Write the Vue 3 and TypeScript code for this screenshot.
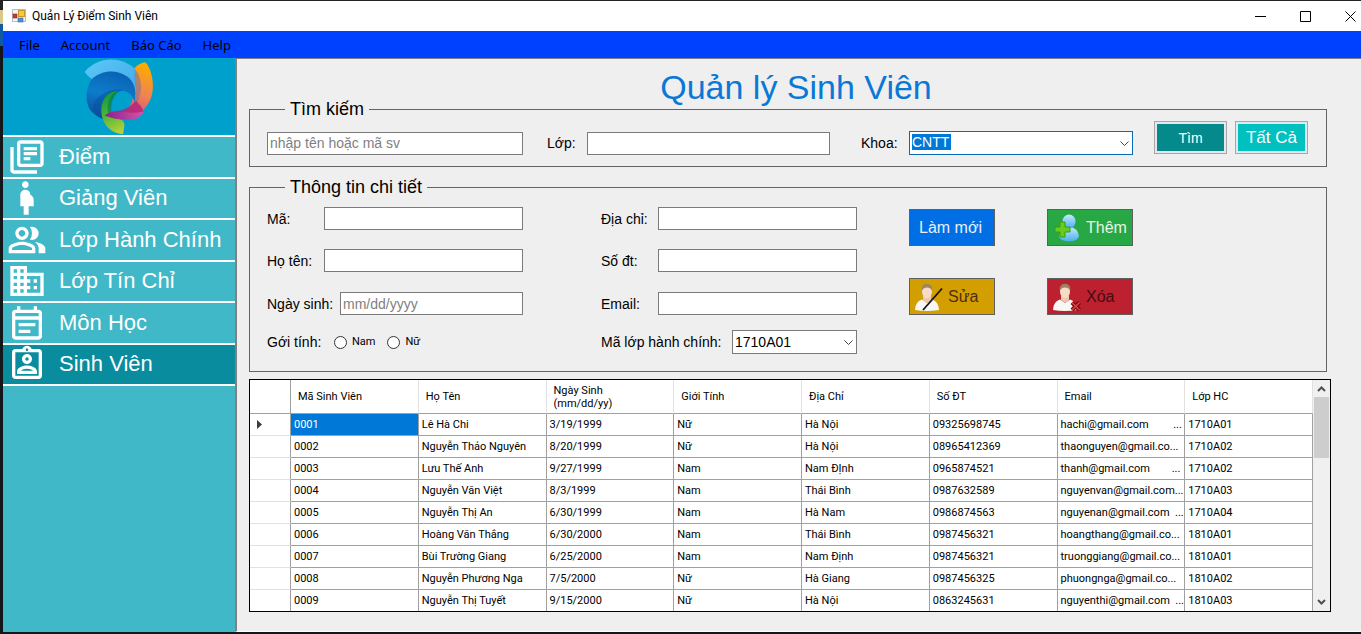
<script setup lang="ts">
import { ref } from 'vue'

interface Student {
  id: string
  name: string
  birth: string
  gender: string
  address: string
  phone: string
  email: string
  group: string
}

const menus = ['File', 'Account', 'Báo Cáo', 'Help']

const navItems = [
  {
    label: 'Điểm',
    path: 'M4 6H2v14c0 1.1.9 2 2 2h14v-2H4V6zm16-4H8c-1.1 0-2 .9-2 2v12c0 1.1.9 2 2 2h12c1.1 0 2-.9 2-2V4c0-1.1-.9-2-2-2zm0 14H8V4h12v12zM10 9h8v2h-8zm0 3h4v2h-4zm0-6h8v2h-8z',
  },
  {
    label: 'Giảng Viên',
    path: 'M9 4c0-1.11.89-2 2-2s2 .89 2 2-.89 2-2 2-2-.89-2-2zm7 9c-.01-1.34-.83-2.51-2-3 0-1.66-1.34-3-3-3s-3 1.34-3 3v7h2v5h3v-5h3v-4z',
  },
  {
    label: 'Lớp Hành Chính',
    path: 'M16.67 13.13C18.04 14.06 19 15.32 19 17v3h4v-3c0-2.18-3.57-3.47-6.33-3.87zM15 12c2.21 0 4-1.79 4-4s-1.79-4-4-4c-.47 0-.91.1-1.33.24a5.98 5.98 0 010 7.52c.42.14.86.24 1.33.24zM9 12c2.21 0 4-1.79 4-4s-1.79-4-4-4-4 1.79-4 4 1.79 4 4 4zm0-6c1.1 0 2 .9 2 2s-.9 2-2 2-2-.9-2-2 .9-2 2-2zm0 7c-2.67 0-8 1.34-8 4v3h16v-3c0-2.66-5.33-4-8-4zm6 5H3v-.99C3.2 16.29 6.3 15 9 15s5.8 1.29 6 2v1z',
  },
  {
    label: 'Lớp Tín Chỉ',
    path: 'M12 7V3H2v18h20V7H12zM6 19H4v-2h2v2zm0-4H4v-2h2v2zm0-4H4V9h2v2zm0-4H4V5h2v2zm4 12H8v-2h2v2zm0-4H8v-2h2v2zm0-4H8V9h2v2zm0-4H8V5h2v2zm10 12h-8v-2h2v-2h-2v-2h2v-2h-2V9h8v10zm-2-8h-2v2h2v-2zm0 4h-2v2h2v-2z',
  },
  {
    label: 'Môn Học',
    path: 'M19 4h-1V2h-2v2H8V2H6v2H5c-1.11 0-1.99.9-1.99 2L3 20c0 1.1.89 2 2 2h14c1.1 0 2-.9 2-2V6c0-1.1-.9-2-2-2zm0 16H5V10h14v10zm0-12H5V6h14v2zM7 12h10v2H7zM7 16h7v2H7z',
  },
  {
    label: 'Sinh Viên',
    path: 'M19 3h-4.18C14.4 1.84 13.3 1 12 1s-2.4.84-2.82 2H5c-1.1 0-2 .9-2 2v14c0 1.1.9 2 2 2h14c1.1 0 2-.9 2-2V5c0-1.1-.9-2-2-2zm-7-.25c.41 0 .75.34.75.75s-.34.75-.75.75-.75-.34-.75-.75.34-.75.75-.75zM19 19H5V5h14v14zM12 6c-1.65 0-3 1.35-3 3s1.35 3 3 3 3-1.35 3-3-1.35-3-3-3zm0 4c-.55 0-1-.45-1-1s.45-1 1-1 1 .45 1 1-.45 1-1 1zM6 16.47V18h12v-1.53c0-2.5-3.97-3.58-6-3.58s-6 1.07-6 3.58zM8.31 16c.69-.56 2.38-1.12 3.69-1.12s3.01.56 3.69 1.12H8.31z',
  },
]
const activeNav = ref('Sinh Viên')

const columns = ['Mã Sinh Viên', 'Họ Tên', 'Ngày Sinh\n(mm/dd/yy)', 'Giới Tính', 'Địa Chỉ', 'Số ĐT', 'Email', 'Lớp HC']

// E-mail comes from a fixed-length column: the blanks are part of the shortened value.
const students: Student[] = [
  { id: '0001', name: 'Lê Hà Chi', birth: '3/19/1999', gender: 'Nữ', address: 'Hà Nội', phone: '09325698745', email: 'hachi@gmail.com         ...', group: '1710A01' },
  { id: '0002', name: 'Nguyễn Thảo Nguyên', birth: '8/20/1999', gender: 'Nữ', address: 'Hà Nội', phone: '08965412369', email: 'thaonguyen@gmail.co...', group: '1710A02' },
  { id: '0003', name: 'Lưu Thế Anh', birth: '9/27/1999', gender: 'Nam', address: 'Nam ĐỊnh', phone: '0965874521', email: 'thanh@gmail.com        ...', group: '1710A02' },
  { id: '0004', name: 'Nguyễn Văn Việt', birth: '8/3/1999', gender: 'Nam', address: 'Thái Bình', phone: '0987632589', email: 'nguyenvan@gmail.com...', group: '1710A03' },
  { id: '0005', name: 'Nguyễn Thị An', birth: '6/30/1999', gender: 'Nam', address: 'Hà Nam', phone: '0986874563', email: 'nguyenan@gmail.com  ...', group: '1710A04' },
  { id: '0006', name: 'Hoàng Văn Thắng', birth: '6/30/2000', gender: 'Nam', address: 'Thái Bình', phone: '0987456321', email: 'hoangthang@gmail.co...', group: '1810A01' },
  { id: '0007', name: 'Bùi Trường Giang', birth: '6/25/2000', gender: 'Nam', address: 'Nam Định', phone: '0987456321', email: 'truonggiang@gmail.co...', group: '1810A01' },
  { id: '0008', name: 'Nguyễn Phương Nga', birth: '7/5/2000', gender: 'Nữ', address: 'Hà Giang', phone: '0987456325', email: 'phuongnga@gmail.co...', group: '1810A02' },
  { id: '0009', name: 'Nguyễn Thị Tuyết', birth: '9/15/2000', gender: 'Nữ', address: 'Hà Nội', phone: '0863245631', email: 'nguyenthi@gmail.com  ...', group: '1810A03' },
]

const selectedId = ref('0001')
const faculty = ref('CNTT')
const groupCode = ref('1710A01')
const gender = ref('')
</script>

<template>
  <div class="window">
    <header class="titlebar">
      <svg class="app-icon" viewBox="0 0 14 14" aria-hidden="true">
        <rect x="0.5" y="0.5" width="13" height="12" fill="#f4f4f4" stroke="#b8bcc4" />
        <rect x="6.5" y="1.5" width="6" height="6" fill="#f7c93c" stroke="#c8962a" />
        <rect x="1" y="5" width="4" height="4" fill="#c43a31" stroke="#8f2a25" stroke-width=".6" />
        <rect x="6" y="9" width="5" height="4" fill="#4c8fd6" stroke="#3a6ea8" stroke-width=".6" />
      </svg>
      <span class="caption">Quản Lý Điểm Sinh Viên</span>
      <div class="win-buttons">
        <button type="button" aria-label="Thu nhỏ">
          <svg viewBox="0 0 11 11"><path d="M0 5.5h11" /></svg>
        </button>
        <button type="button" aria-label="Phóng to">
          <svg viewBox="0 0 11 11"><path d="M.5.5h10v10h-10z" /></svg>
        </button>
        <button type="button" aria-label="Đóng">
          <svg viewBox="0 0 11 11"><path d="M.5.5l10 10M10.5.5l-10 10" /></svg>
        </button>
      </div>
    </header>

    <nav class="menubar">
      <button v-for="m in menus" :key="m" type="button">{{ m }}</button>
    </nav>

    <div class="body">
      <aside class="sidebar">
        <div class="logo">
          <svg viewBox="250 175 220 235" aria-hidden="true">
            <defs>
              <linearGradient id="sky" x1="0" y1="0" x2="1" y2="1">
                <stop offset="0" stop-color="#5cc8f6" /><stop offset="1" stop-color="#3fa9ea" />
              </linearGradient>
              <linearGradient id="blue" x1="0.6" y1="0" x2="0.3" y2="1">
                <stop offset="0" stop-color="#0a62b4" /><stop offset=".5" stop-color="#0d7ccb" /><stop offset="1" stop-color="#0a4f9c" />
              </linearGradient>
              <linearGradient id="orange" x1="0.6" y1="0" x2="0.3" y2="1">
                <stop offset="0" stop-color="#ffaa00" /><stop offset=".5" stop-color="#f08254" /><stop offset="1" stop-color="#c9418c" />
              </linearGradient>
              <linearGradient id="pink" x1="0" y1="0" x2="1" y2="0">
                <stop offset="0" stop-color="#8c1f8c" /><stop offset="1" stop-color="#d355ab" />
              </linearGradient>
              <linearGradient id="green" x1="0.3" y1="0" x2="0.6" y2="1">
                <stop offset="0" stop-color="#0c9640" /><stop offset=".5" stop-color="#4fb63c" /><stop offset="1" stop-color="#b4cf38" />
              </linearGradient>
            </defs>
            <path fill="url(#orange)" d="M405 206Q420 190 438 188C456 206 466 250 458 285C450 320 420 350 385 357Q360 360 345 350C385 336 402 315 401 280Q404 235 405 206Z" />
            <path fill="url(#sky)" d="M255 217C285 180 340 168 385 192Q398 198 407 208L408 292C398 240 350 210 277 238Q262 228 255 217Z" />
            <path fill="url(#blue)" d="M277 238C305 212 350 208 382 230C404 246 413 270 405 310C402 284 378 268 356 275C330 285 318 318 326 345L309 358C283 349 262 328 261 296C260 274 266 252 277 238Z" />
            <path fill="#0a4c96" opacity=".45" d="M282 330C270 300 330 260 372 272C345 278 326 302 326 345L309 358Q292 350 282 330Z" />
            <path fill="#7d7796" opacity=".6" d="M406 208Q424 226 425 262Q425 302 398 329Q410 302 409 270Q403 232 406 208Z" />
            <path fill="url(#green)" d="M356 274C336 288 324 318 332 344C342 360 372 352 375 376L371 405C325 400 304 366 305 328C307 297 328 275 356 274Z" />
            <path fill="#0b7b38" opacity=".6" d="M356 274C330 283 319 315 326 342L336 342Q330 305 356 274Z" />
            <path fill="url(#pink)" d="M315 348Q345 328 372 337Q400 344 433 335Q430 351 412 357C382 365 345 360 315 348Z" />
            <path fill="#b01d7c" opacity=".75" d="M352 336Q384 332 410 304Q430 325 432 336Q398 344 372 337Z" />
          </svg>
        </div>
        <nav class="side-nav">
          <button
            v-for="item in navItems"
            :key="item.label"
            type="button"
            :class="{ active: item.label === activeNav }"
            @click="activeNav = item.label"
          >
            <svg viewBox="0 0 24 24" aria-hidden="true"><path :d="item.path" /></svg>
            <span>{{ item.label }}</span>
          </button>
        </nav>
      </aside>

      <main class="content">
        <h1>Quản lý Sinh Viên</h1>

        <fieldset class="search">
          <legend>Tìm kiếm</legend>
          <div class="search-fields">
            <input class="f-keyword" type="text" placeholder="nhập tên hoặc mã sv" aria-label="Tìm kiếm" />
            <label for="lop">Lớp:</label>
            <input id="lop" class="f-class" type="text" />
            <label for="khoa">Khoa:</label>
            <span class="combo f-faculty highlighted">
              <select id="khoa" v-model="faculty"><option>CNTT</option></select>
              <svg viewBox="0 0 9 6" aria-hidden="true"><path d="M.5.5l4 4 4-4" /></svg>
            </span>
          </div>
          <div class="search-actions">
            <button type="button" class="find">Tìm</button>
            <button type="button" class="all">Tất Cả</button>
          </div>
        </fieldset>

        <fieldset class="details">
          <legend>Thông tin chi tiết</legend>
          <div class="column">
            <div class="row"><label for="ma">Mã:</label><input id="ma" type="text" /></div>
            <div class="row"><label for="ten">Họ tên:</label><input id="ten" type="text" /></div>
            <div class="row wide"><label for="ns">Ngày sinh:</label><input id="ns" type="text" placeholder="mm/dd/yyyy" /></div>
            <div class="row genders" role="radiogroup" aria-labelledby="gt">
              <span id="gt">Gới tính:</span>
              <label><input v-model="gender" type="radio" name="gender" value="Nam" />Nam</label>
              <label><input v-model="gender" type="radio" name="gender" value="Nữ" />Nữ</label>
            </div>
          </div>
          <div class="column">
            <div class="row"><label for="dc">Địa chỉ:</label><input id="dc" type="text" /></div>
            <div class="row"><label for="dt">Số đt:</label><input id="dt" type="text" /></div>
            <div class="row"><label for="em">Email:</label><input id="em" type="text" /></div>
            <div class="row group-code">
              <label for="lhc">Mã lớp hành chính:</label>
              <span class="combo">
                <select id="lhc" v-model="groupCode"><option>1710A01</option></select>
                <svg viewBox="0 0 9 6" aria-hidden="true"><path d="M.5.5l4 4 4-4" /></svg>
              </span>
            </div>
          </div>
          <div class="actions">
            <button type="button" class="reset">Làm mới</button>
            <button type="button" class="add">
              <svg viewBox="0 0 28 28" aria-hidden="true">
                <defs>
                  <linearGradient id="person" x1="0" y1="0" x2="0" y2="1">
                    <stop offset="0" stop-color="#c4eafc" /><stop offset="1" stop-color="#4aaeee" />
                  </linearGradient>
                </defs>
                <path d="M6 23C7 16 12 13 17 13Q25 14 26 22Q25 27 16 27.500Q8 27 6 23Z" fill="url(#person)" />
                <ellipse cx="16" cy="7.500" rx="6.500" ry="7" fill="url(#person)" />
                <path d="M7 8h5v5h5v5h-5v5H7v-5H2v-5h5z" fill="#66cc1e" stroke="#3d9a14" />
              </svg>
              <span>Thêm</span>
            </button>
            <button type="button" class="edit">
              <svg viewBox="0 0 28 28" aria-hidden="true">
                <path d="M0 27Q0 19 7 16.500L12 20 17 16.500Q24 19 24 27Q12 29 0 27Z" fill="#f7f7f5" />
                <path d="M8 13h8v4l-4 3-4-3z" fill="#ecc9ae" />
                <ellipse cx="12" cy="8.500" rx="5" ry="6.800" fill="#f6dcc6" />
                <path d="M6.800 8Q6 1 12 .8Q18 1 17.200 8Q16 4.500 12 4.500T6.800 8Z" fill="#9b8563" />
                <path d="M8 27L27 5.500" stroke="#141414" stroke-width="1.800" />
              </svg>
              <span>Sửa</span>
            </button>
            <button type="button" class="remove">
              <svg viewBox="0 0 28 28" aria-hidden="true">
                <path d="M0 27Q0 19 7 16.500L12 20 17 16.500Q24 19 24 27Q12 29 0 27Z" fill="#f7f7f5" />
                <path d="M8 13h8v4l-4 3-4-3z" fill="#ecc9ae" />
                <ellipse cx="12" cy="8.500" rx="5" ry="6.800" fill="#f6dcc6" />
                <path d="M6.800 8Q6 1 12 .8Q18 1 17.200 8Q16 4.500 12 4.500T6.800 8Z" fill="#9b8563" />
                <path d="M19 19.500l7.500 7.500M26.500 19.500l-7.500 7.500" stroke="#74090f" stroke-width="4" />
                <path d="M19 19.500l7.500 7.500M26.500 19.500l-7.500 7.500" stroke="#e84040" stroke-width="1.600" />
              </svg>
              <span>Xóa</span>
            </button>
          </div>
        </fieldset>

        <div class="grid">
          <table>
            <colgroup><col class="marker-col" /><col v-for="c in columns" :key="c" /></colgroup>
            <thead>
              <tr>
                <th class="marker"></th>
                <th v-for="c in columns" :key="c" scope="col">{{ c }}</th>
              </tr>
            </thead>
            <tbody>
              <tr v-for="s in students" :key="s.id" @click="selectedId = s.id">
                <td class="marker">
                  <svg v-if="s.id === selectedId" viewBox="0 0 5 9" aria-hidden="true"><path d="M0 0l5 4.500L0 9z" /></svg>
                </td>
                <td :class="{ selected: s.id === selectedId }">{{ s.id }}</td>
                <td>{{ s.name }}</td>
                <td>{{ s.birth }}</td>
                <td>{{ s.gender }}</td>
                <td>{{ s.address }}</td>
                <td>{{ s.phone }}</td>
                <td class="email">{{ s.email }}</td>
                <td>{{ s.group }}</td>
              </tr>
            </tbody>
          </table>
          <div class="scrollbar" aria-hidden="true">
            <svg viewBox="0 0 9 6"><path d="M1 5l3.500-3.500L8 5" /></svg>
            <div class="track"><div class="thumb"></div></div>
            <svg viewBox="0 0 9 6"><path d="M1 1l3.500 3.500L8 1" /></svg>
          </div>
        </div>
      </main>
    </div>
  </div>
</template>

<style>
body {
  margin: 0;
  background: #16181b;
}
</style>

<style scoped>
* {
  box-sizing: border-box;
}
button,
input,
select {
  font: inherit;
  color: inherit;
  border-radius: 0;
  margin: 0;
}
.window {
  display: flex;
  flex-direction: column;
  min-height: 100vh;
  padding: 1px 0 2px 3px;
  font: 14px/20px "Liberation Sans", Arial, sans-serif;
  color: #000;
  background: linear-gradient(#222 10px, #d9c88c 10px 24px, #0f5aa0 24px 46px, #14171a 46px);
}
.titlebar {
  display: flex;
  align-items: center;
  height: 30px;
  padding-left: 9px;
  background: #fff;
}
.app-icon {
  width: 14px;
  height: 14px;
}
.caption {
  flex: 1;
  padding-left: 6px;
  font: 12px/16px Roboto, sans-serif;
}
.win-buttons {
  display: flex;
  gap: 23px;
}
.win-buttons button {
  display: flex;
  justify-content: center;
  align-items: center;
  width: 22px;
  height: 30px;
  padding: 0;
  border: 0;
  background: none;
}
.win-buttons svg {
  width: 11px;
  height: 11px;
  fill: none;
  stroke: #000;
}
.menubar {
  display: flex;
  gap: 21px;
  height: 27px;
  padding-left: 16px;
  background: #0040ff;
  font: 13px/28px "Noto Sans", sans-serif;
}
.menubar button {
  padding: 0;
  border: 0;
  background: none;
}
.body {
  display: flex;
  flex: 1;
}
.sidebar {
  width: 232px;
  flex: none;
  background: #40b8c8;
}
.logo {
  display: flex;
  justify-content: center;
  height: 77px;
  background: #00a0cc;
}
.logo svg {
  width: 73px;
  height: 78px;
}
.side-nav {
  display: flex;
  flex-direction: column;
  height: 251px;
  border-top: 2px solid #fff;
}
.side-nav button {
  display: flex;
  flex: 1;
  align-items: center;
  gap: 12px;
  min-height: 0;
  padding: 0 0 0 4px;
  border: 0;
  border-bottom: 2px solid #fff;
  background: none;
  color: #fff;
  font-size: 22px;
  line-height: 28px;
  text-align: left;
}
.side-nav button.active {
  background: #088c9e;
}
.side-nav svg {
  width: 40px;
  height: 40px;
  fill: #fff;
}
.content {
  flex: 1;
  min-width: 0;
  padding: 16px 30px 17px 12px;
  border: 1px solid #808080;
  border-width: 1px 0 0 2px;
  border-bottom: 1px solid #fff;
  background: #efefef;
}
h1 {
  margin: 0;
  padding-left: 12px;
  font-size: 34px;
  font-weight: 400;
  line-height: 24px;
  text-align: center;
  color: #0a78d6;
}
fieldset {
  min-width: 0;
  margin: 0 4px 10px 0;
  border: 1px solid #646464;
}
legend {
  margin-left: 18px;
  padding: 0 5px;
  font-size: 18px;
  line-height: 20px;
}
input[type='text'],
select {
  width: 100%;
  min-width: 0;
  height: 23px;
  padding: 0 2px;
  border: 1px solid #7a7a7a;
  background: #fff;
  font-size: 14px;
  outline: 0;
}
input::placeholder {
  color: #7f7f7f;
}
select {
  height: 24px;
  appearance: none;
}
.combo {
  position: relative;
  display: flex;
}
.combo svg {
  position: absolute;
  right: 4px;
  top: 10px;
  width: 9px;
  height: 6px;
  fill: none;
  stroke: #444;
  pointer-events: none;
}
.highlighted select {
  padding-bottom: 2px;
  border-color: #0a6ab8;
  color: #fff;
  background: linear-gradient(#0078d7, #0078d7) 2px 2px / 39px 16px no-repeat #fff;
}
.highlighted option {
  color: #000;
}
.search {
  display: flex;
  gap: 21px;
  padding: 0 18px 0 17px;
}
.search-fields {
  display: flex;
  flex: 1;
  align-items: center;
  min-width: 0;
  padding: 12px 0 11px;
}
.search-fields label {
  flex: none;
}
.search-fields label[for='lop'] {
  width: 40px;
  margin-left: 24px;
}
.search-fields label[for='khoa'] {
  width: 48px;
  margin-left: 31px;
}
.search-fields .f-keyword {
  flex: 1 1 256px;
}
.search-fields .f-class {
  flex: 1 1 243px;
}
.search-fields .f-faculty {
  flex: 1 1 224px;
}
.search-actions {
  display: flex;
  gap: 8px;
  padding-top: 2px;
}
.search-actions button {
  width: 73px;
  height: 33px;
  padding: 0;
  border: 1px solid #aaa6a8;
  box-shadow: inset 0 0 0 2px #e3e8ee;
  color: #fff;
}
.search-actions .find {
  background: #048a8a;
}
.search-actions .all {
  background: #00c0c0;
  font-size: 17px;
}
.details {
  display: grid;
  grid-template-columns: minmax(0, 334fr) minmax(0, 308fr) auto;
  margin-bottom: 7px;
  padding: 10px 193px 17px 17px;
}
.column {
  display: grid;
  grid-template-rows: 42px 43px 38px 24px;
  align-items: start;
  margin-right: 78px;
}
.column + .column {
  margin-right: 52px;
}
.row {
  display: grid;
  grid-template-columns: 57px minmax(0, 1fr);
  align-items: center;
}
.row.wide {
  grid-template-columns: 73px minmax(0, 1fr);
}
.row.group-code {
  grid-template-columns: 131px minmax(0, 1fr);
}
.row label {
  white-space: nowrap;
}
.row.genders {
  display: flex;
  height: 24px;
}
.genders > span {
  width: 67px;
}
.genders label {
  display: flex;
  align-items: center;
  gap: 5px;
  margin-right: 12px;
  font: 11px/16px Roboto, sans-serif;
}
.genders input {
  appearance: none;
  width: 13px;
  height: 13px;
  border: 1px solid #333;
  border-radius: 50%;
  background: #fff;
}
.genders input:checked {
  background: radial-gradient(#222 3px, #fff 4px);
}
.actions {
  display: grid;
  grid-template-columns: 86px 86px;
  grid-auto-rows: 37px;
  gap: 32px 52px;
  padding-top: 2px;
}
.actions button {
  display: flex;
  align-items: center;
  gap: 5px;
  padding: 0 0 0 5px;
  border: 1px solid #5f5f5f;
  font-size: 16px;
  white-space: nowrap;
}
.actions svg {
  flex: none;
  width: 28px;
  height: 28px;
  fill: none;
}
.actions .reset {
  padding-left: 9px;
  background: #006fe6;
  color: #e8f0fb;
}
.actions .add {
  background: #28a745;
  color: #e9f5e4;
}
.actions .edit {
  background: #d39e00;
  color: #4d2f10;
}
.actions .remove {
  background: #bd2130;
  color: #430d12;
}
.grid {
  display: flex;
  border: 1px solid #000;
  background: #fff;
  font: 11px/14px Roboto, sans-serif;
}
table {
  flex: 1;
  min-width: 0;
  width: 100%;
  table-layout: fixed;
  border-collapse: separate;
  border-spacing: 0;
}
.marker-col {
  width: 41px;
}
th {
  height: 34px;
  padding: 0 7px;
  border-right: 1px solid #e2e2e2;
  border-bottom: 1px solid #a0a0a0;
  font-weight: 400;
  line-height: 13px;
  text-align: left;
  white-space: pre-line;
}
td {
  height: 22px;
  padding: 0 3px;
  border-right: 1px solid #a0a0a0;
  border-bottom: 1px solid #a0a0a0;
  white-space: nowrap;
}
tbody tr:last-child td {
  height: 21px;
  border-bottom: 0;
}
th.marker {
  border-right-color: #a0a0a0;
}
td.marker {
  padding-left: 7px;
  border-bottom-color: #e2e2e2;
}
.marker svg {
  display: block;
  width: 5px;
  height: 9px;
  fill: #3c3c3c;
}
td.selected {
  background: #0078d7;
  color: #fff;
}
td.email {
  padding-right: 0;
  white-space: pre;
}
.scrollbar {
  display: flex;
  flex-direction: column;
  align-items: center;
  width: 17px;
  flex: none;
  padding: 6px 0;
  background: #f0f0f0;
}
.scrollbar svg {
  width: 9px;
  height: 6px;
  fill: none;
  stroke: #505050;
  stroke-width: 2;
}
.track {
  flex: 1;
  width: 15px;
  padding-top: 5px;
}
.thumb {
  height: 61px;
  background: #cdcdcd;
}
</style>
